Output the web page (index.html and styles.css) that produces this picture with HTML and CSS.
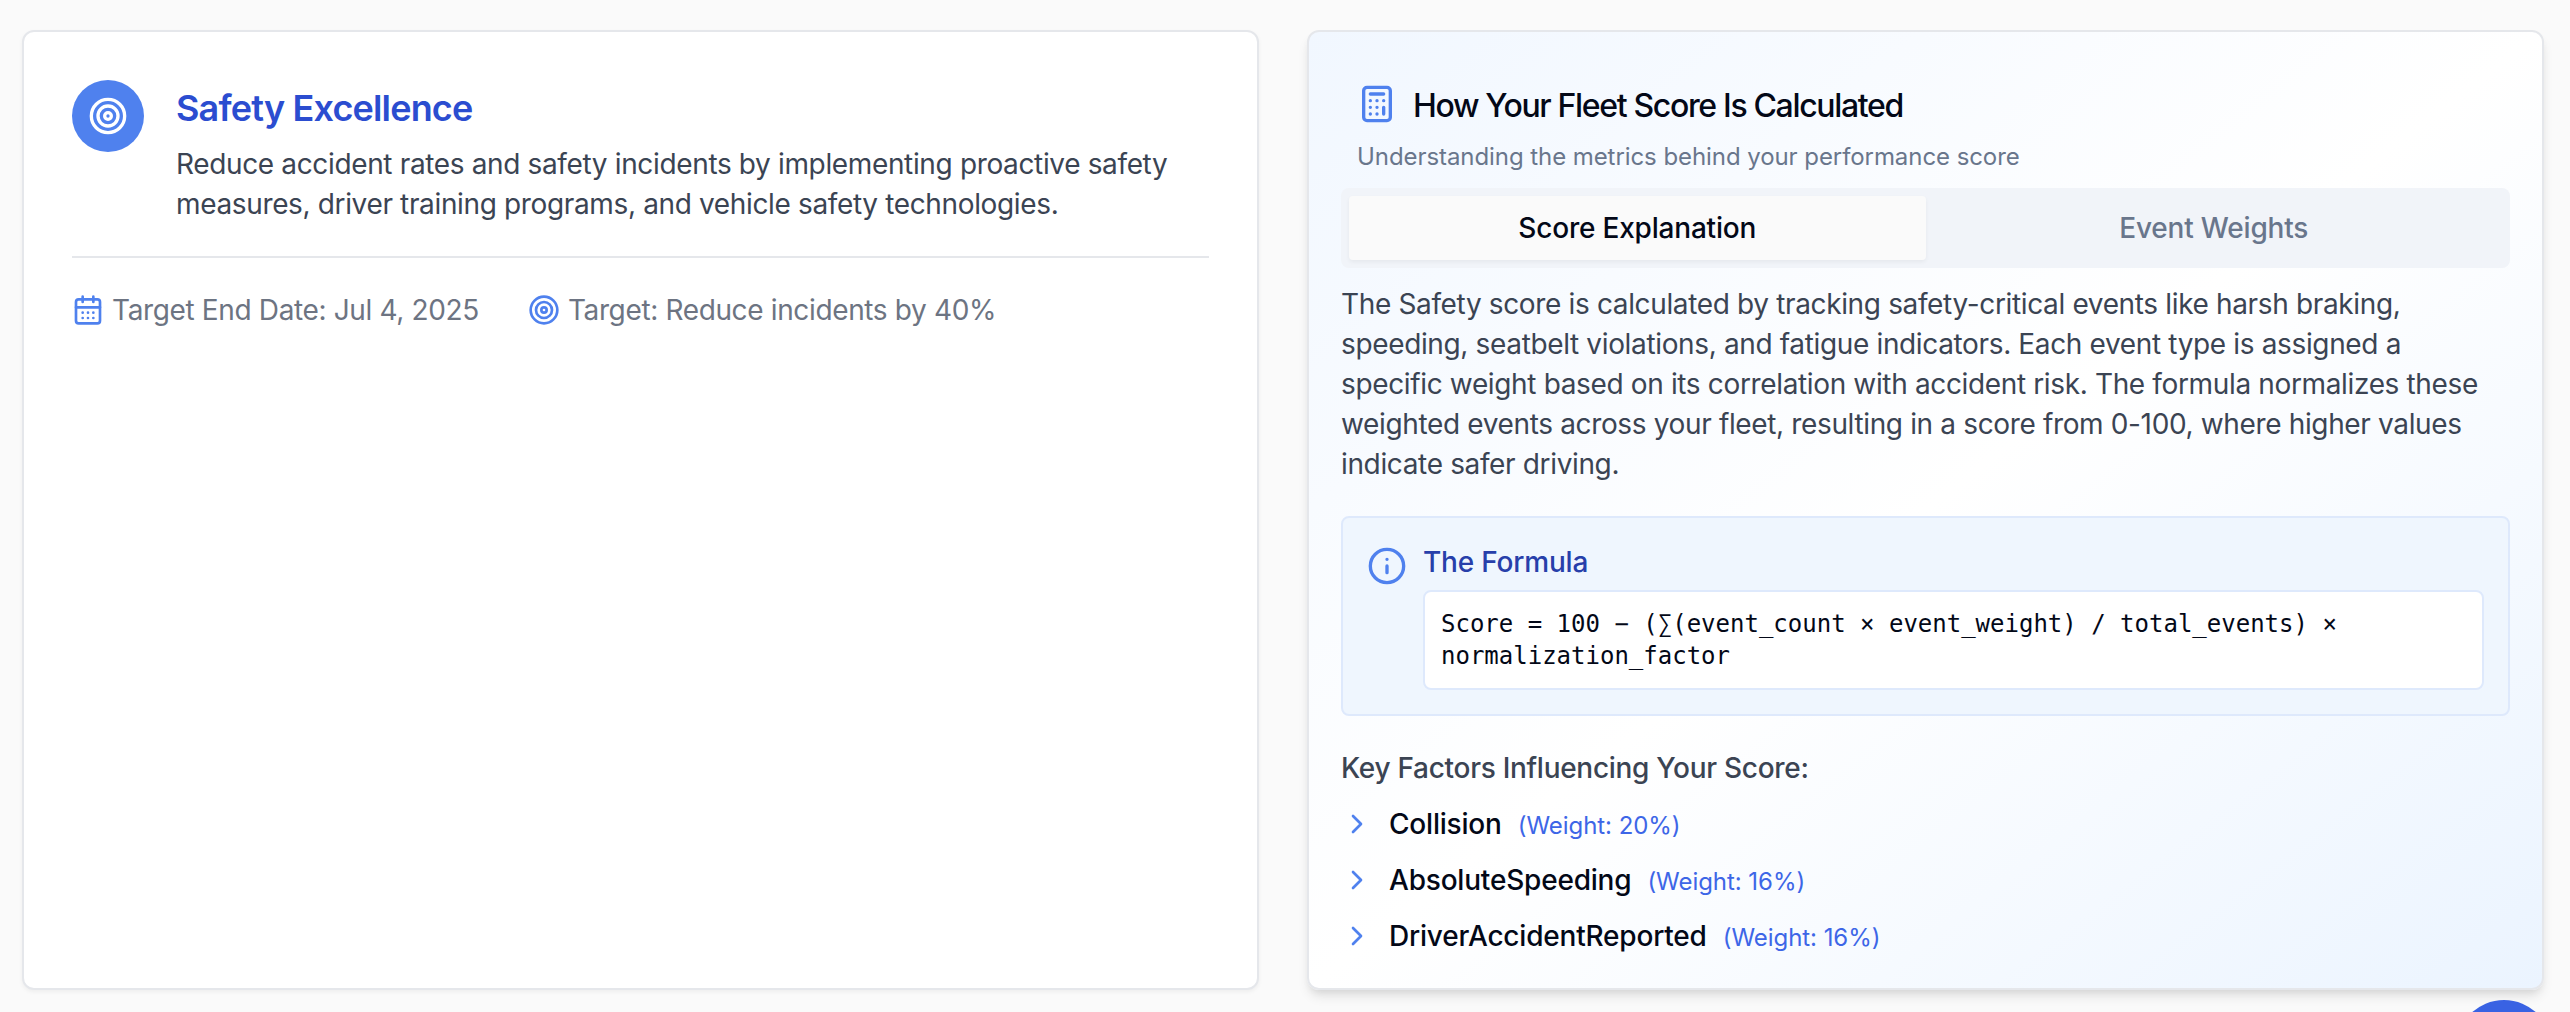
FILE: index.html
```html
<!DOCTYPE html>
<html lang="en">
<head>
<meta charset="utf-8">
<title>Fleet Score</title>
<link rel="stylesheet" href="styles.css">
</head>
<body>
<main class="cards">
  <section class="card goal">
    <div class="goal-top">
      <div class="goal-badge">
        <svg class="icon icon-40" viewBox="0 0 24 24"><circle cx="12" cy="12" r="10"/><circle cx="12" cy="12" r="6"/><circle cx="12" cy="12" r="2"/></svg>
      </div>
      <div>
        <h2 class="goal-title">Safety Excellence</h2>
        <p class="body-text">Reduce accident rates and safety incidents by implementing proactive safety<br>measures, driver training programs, and vehicle safety technologies.</p>
      </div>
    </div>
    <div class="goal-meta">
      <div class="meta-item">
        <svg class="icon icon-32" viewBox="0 0 24 24"><path d="M8 2v4M16 2v4"/><rect x="3" y="4" width="18" height="18" rx="2"/><path d="M3 10h18M8 14h.01M12 14h.01M16 14h.01M8 18h.01M12 18h.01M16 18h.01"/></svg>
        <span>Target End Date: Jul 4, 2025</span>
      </div>
      <div class="meta-item">
        <svg class="icon icon-32" viewBox="0 0 24 24"><circle cx="12" cy="12" r="10"/><circle cx="12" cy="12" r="6"/><circle cx="12" cy="12" r="2"/></svg>
        <span>Target: Reduce incidents by 40%</span>
      </div>
    </div>
  </section>

  <section class="card score">
    <header class="score-header">
      <h2 class="score-title">
        <svg class="icon icon-40" viewBox="0 0 24 24"><rect x="4" y="2" width="16" height="20" rx="2"/><path d="M8 6h8M16 14v4M16 10h.01M12 10h.01M8 10h.01M12 14h.01M8 14h.01M12 18h.01M8 18h.01"/></svg>
        <span class="score-title-text">How Your Fleet Score Is Calculated</span>
      </h2>
      <p class="score-desc">Understanding the metrics behind your performance score</p>
    </header>
    <div class="tabs">
      <div class="tab tab-active">Score Explanation</div>
      <div class="tab">Event Weights</div>
    </div>
    <p class="body-text explanation">The Safety score is calculated by tracking safety-critical events like harsh braking,<br>speeding, seatbelt violations, and fatigue indicators. Each event type is assigned a<br>specific weight based on its correlation with accident risk. The formula normalizes these<br>weighted events across your fleet, resulting in a score from 0-100, where higher values<br>indicate safer driving.</p>
    <div class="formula">
      <svg class="icon icon-40 formula-icon" viewBox="0 0 24 24"><circle cx="12" cy="12" r="10"/><path d="M12 16v-4M12 8h.01"/></svg>
      <div class="formula-body">
        <h3 class="formula-title">The Formula</h3>
        <div class="formula-code">Score = 100 − (∑(event_count × event_weight) / total_events) ×<br>normalization_factor</div>
      </div>
    </div>
    <h3 class="factors-title">Key Factors Influencing Your Score:</h3>
    <ul class="factors">
      <li class="factor"><svg class="icon icon-32" viewBox="0 0 24 24"><path d="m9 18 6-6-6-6"/></svg><div class="factor-text"><span class="factor-name">Collision</span><span class="factor-weight">(Weight: 20%)</span></div></li>
      <li class="factor"><svg class="icon icon-32" viewBox="0 0 24 24"><path d="m9 18 6-6-6-6"/></svg><div class="factor-text"><span class="factor-name">AbsoluteSpeeding</span><span class="factor-weight">(Weight: 16%)</span></div></li>
      <li class="factor"><svg class="icon icon-32" viewBox="0 0 24 24"><path d="m9 18 6-6-6-6"/></svg><div class="factor-text"><span class="factor-name">DriverAccidentReported</span><span class="factor-weight">(Weight: 16%)</span></div></li>
    </ul>
  </section>
</main>
<div class="fab"></div>
</body>
</html>
```
FILE: styles.css
```css
* { box-sizing: border-box; margin: 0; padding: 0; }

body {
  position: relative;
  height: 1012px;
  overflow: hidden;
  background: #fafafa;
  color: #030817;
  font-family: Inter, "Liberation Sans", sans-serif;
  font-size: 28px;
  line-height: 40px;
}

h2, h3 { font-size: inherit; font-weight: 500; }

.icon {
  display: block;
  flex: none;
  fill: none;
  stroke: #4f81ee;
  stroke-width: 2;
  stroke-linecap: round;
  stroke-linejoin: round;
}
.icon-32 { width: 32px; height: 32px; }
.icon-40 { width: 40px; height: 40px; }

.cards {
  display: grid;
  grid-template-columns: 1fr 1fr;
  gap: 48px;
  height: 990px;
  padding: 30px 26px 0 22px;
}

.card {
  border: 2px solid #e5e7eb;
  border-radius: 12px;
  white-space: nowrap;
}

.body-text { color: #3b4453; letter-spacing: -0.355px; }

/* Goal card */
.goal { padding: 48px; background: #fff; box-shadow: 0 2px 4px rgba(0, 0, 0, 0.05); }
.goal-top { display: flex; gap: 32px; padding-bottom: 32px; border-bottom: 2px solid #e5e7eb; }
.goal-badge {
  display: flex;
  flex: none;
  align-items: center;
  justify-content: center;
  width: 72px;
  height: 72px;
  border-radius: 50%;
  background: #4f81ee;
}
.goal-badge .icon { stroke: #fff; }
.goal-title {
  margin-bottom: 8px;
  color: #2b4dd0;
  font-size: 36px;
  font-weight: 600;
  line-height: 56px;
  letter-spacing: -0.82px;
}
.goal-meta { display: flex; gap: 49px; padding-top: 32px; color: #6d7482; letter-spacing: -0.36px; }
.meta-item { display: flex; align-items: center; gap: 8px; }

/* Score card */
.score {
  padding: 48px 32px 32px;
  background: linear-gradient(to bottom right, #f1f7ff, #fff 50%, #ebf4ff);
  box-shadow: 0 8px 12px -2px rgba(0, 0, 0, 0.1), 0 4px 8px -4px rgba(0, 0, 0, 0.1);
}
.score-header { padding: 0 16px; }
.score-title {
  display: flex;
  align-items: center;
  gap: 16px;
  margin-bottom: 8px;
  font-size: 32px;
  line-height: 48px;
  letter-spacing: -1.34px;
}
.score-title-text { padding-top: 1px; line-height: 49px; margin-bottom: -2px; }
.score-desc { padding-top: 1px; margin-bottom: -1px; color: #69768c; font-size: 24px; letter-spacing: -0.07px; }

.tabs {
  display: grid;
  grid-template-columns: 1fr 1fr;
  margin: 12px 0 16px;
  padding: 8px;
  border-radius: 8px;
  background: #f1f4f9;
}
.tab {
  padding: 12px;
  border-radius: 4px;
  color: #69768c;
  font-weight: 500;
  text-align: center;
  letter-spacing: -0.2px;
}
.tab-active { background: #fafafa; color: #030817; box-shadow: 0 2px 4px rgba(0, 0, 0, 0.05); }

.formula {
  display: flex;
  gap: 16px;
  margin: 32px 0;
  padding: 24px;
  border: 2px solid #dee9fc;
  border-radius: 8px;
  background: #eff6fe;
}
.formula-icon { margin-top: 4px; }
.formula-body { flex: 1; }
.formula-title { margin-bottom: 8px; color: #273faa; letter-spacing: -0.2px; }
.formula-code {
  padding: 16px;
  border: 2px solid #dee9fc;
  border-radius: 8px;
  background: #fff;
  font-family: "DejaVu Sans Mono", monospace;
  font-size: 24px;
  line-height: 32px;
}

.factors-title { margin-bottom: 16px; color: #3b4453; letter-spacing: -0.29px; }
.factors { display: flex; flex-direction: column; gap: 16px; list-style: none; }
.factor { display: flex; align-items: center; gap: 16px; height: 40px; }
.factor-text { display: flex; align-items: baseline; gap: 16px; height: 40px; }
.factor-name { font-weight: 500; letter-spacing: -0.2px; }
.factor-weight { color: #3d66e7; font-size: 24px; letter-spacing: -0.05px; }

/* Floating button, cut off by the bottom edge of the window */
.fab {
  position: absolute;
  top: 1000px;
  left: 2456px;
  width: 96px;
  height: 96px;
  border-radius: 50%;
  background: #3962e3;
}
```
